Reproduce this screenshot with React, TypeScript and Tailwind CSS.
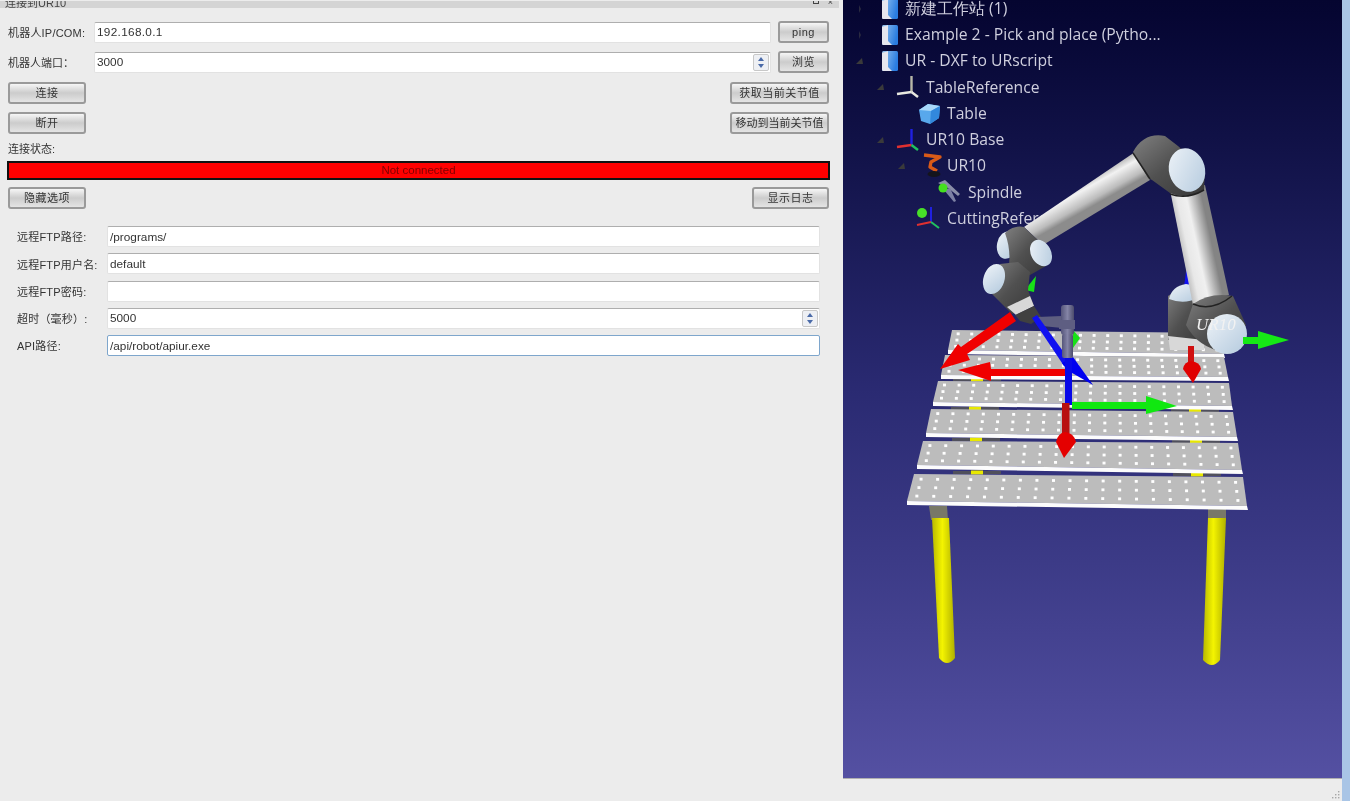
import React from "react";

const ui = "font-['Liberation_Sans','Noto_Sans_CJK_SC',sans-serif]";

function Btn({ children, className = "" }: { children: React.ReactNode; className?: string }) {
  return (
    <div className={`h-[22px] flex items-center justify-center rounded-[3px] border-2 border-[#9a9a9a] bg-gradient-to-b from-[#f6f6f6] via-[#cccccc] to-[#e4e4e4] text-[11px] tracking-[0.5px] text-[#333] ${className}`}>
      {children}
    </div>
  );
}

function Spin({ className = "" }: { className?: string }) {
  return (
    <div className={`w-[16px] h-[17px] flex flex-col border border-[#c8c8c8] bg-[#eef0f4] rounded-[2px] ${className}`}>
      <svg width="14" height="8" viewBox="0 0 14 8"><path d="M7 2 L10 6 H4 Z" fill="#4a6aa8" /></svg>
      <svg width="14" height="7" viewBox="0 0 14 7"><path d="M7 5 L10 1 H4 Z" fill="#4a6aa8" /></svg>
    </div>
  );
}

function Field({ value, spin, focus, className = "" }: { value?: string; spin?: boolean; focus?: boolean; className?: string }) {
  return (
    <div className={`flex-1 h-[21px] flex items-center justify-between rounded-[2px] bg-white border ${focus ? "border-[#7ea6cc]" : "border-[#e2e2e2] border-t-[#aeaeae]"} pl-[2px] pr-[1px] text-[11.8px] text-[#333] ${className}`}>
      <span className="pt-[2px]">{value}</span>
      {spin && <Spin />}
    </div>
  );
}

function FormRow({ label, value, spin, focus }: { label: string; value?: string; spin?: boolean; focus?: boolean }) {
  return (
    <div className="flex items-center">
      <div className="w-[90px] pt-[2px] text-[11px] tracking-[0.2px] text-[#333] whitespace-nowrap">{label}</div>
      <Field value={value} spin={spin} focus={focus} />
    </div>
  );
}

function Station() {
  return (
    <svg width="17" height="22" viewBox="0 0 17 22">
      <defs>
        <linearGradient id="st" x1="0" y1="0" x2="1" y2="0.3">
          <stop offset="0" stopColor="#9cc8f0" /><stop offset="1" stopColor="#2a7ce0" />
        </linearGradient>
      </defs>
      <rect x="1" y="1" width="16" height="20" rx="1.5" fill="url(#st)" />
      <path d="M1 3 L7 1 V17 L11 21 H2 Q1 21 1 19 Z" fill="#e6e6ee" />
    </svg>
  );
}

function Frame({ color }: { color?: boolean }) {
  const z = color ? "#2020e0" : "#b8b8a8";
  const x = color ? "#e03030" : "#e8e8e0";
  const y = color ? "#20c060" : "#e8e8e0";
  return (
    <svg width="25" height="24" viewBox="0 0 25 24" className="shrink-0">
      <path d="M16.5 1 V17" stroke={z} strokeWidth="2.4" />
      <path d="M16.5 17 L2 19" stroke={x} strokeWidth="2.4" />
      <path d="M16.5 17 L23 22" stroke={y} strokeWidth="2.4" />
    </svg>
  );
}

function Box() {
  return (
    <svg width="23" height="22" viewBox="0 0 23 22">
      <path d="M1 7 L10 1 L22 3 L21 15 L12 21 L3 18 Z" fill="#58a8ec" />
      <path d="M1 7 L10 1 L22 3 L13 8 Z" fill="#a8d8fa" />
      <path d="M13 8 L22 3 L21 15 L12 21 Z" fill="#3288dc" />
    </svg>
  );
}

function RobotIcon() {
  return (
    <svg width="20" height="26" viewBox="0 0 20 26">
      <path d="M1 2 L17 4 L8 9 L7 14 L14 18" stroke="#d85a18" strokeWidth="3.4" fill="none" strokeLinejoin="round" />
      <ellipse cx="11" cy="21" rx="6.5" ry="3" fill="#14141c" />
    </svg>
  );
}

function Spindle() {
  return (
    <svg width="24" height="24" viewBox="0 0 24 24">
      <path d="M1 3 L8 0 L23 14 L21 16 L11 8 Z" fill="#8a8ea8" />
      <path d="M7 10 L17 22 L19 21 L13 8 Z" fill="#7c80a4" />
      <circle cx="6" cy="8" r="4.5" fill="#44e020" />
    </svg>
  );
}

function CutIcon() {
  return (
    <svg width="25" height="24" viewBox="0 0 25 24">
      <circle cx="6" cy="6" r="5" fill="#48e028" />
      <path d="M15 0 V15" stroke="#2020e0" strokeWidth="2" />
      <path d="M15 15 L1 18" stroke="#e03030" strokeWidth="2" />
      <path d="M15 15 L23 21" stroke="#20c060" strokeWidth="2" />
    </svg>
  );
}

const levels = ["pl-[4px]", "pl-[25px]", "pl-[46px]", "pl-[67px]"];

function TreeRow({ level, open, none, icon, text }: { level: number; open?: boolean; none?: boolean; icon: React.ReactNode; text: string }) {
  return (
    <div className={`h-[26.25px] flex items-center whitespace-nowrap ${levels[level]}`}>
      <div className="w-[34px] pl-[9px] shrink-0">
        {!none && (
          <svg width="8" height="8" viewBox="0 0 8 8">
            {open ? <path d="M6 1 L7 7 H0 Z" fill="#3a3a3a" /> : <path d="M3 0 L5 4 L3 8 Z" fill="#2a2a40" />}
          </svg>
        )}
      </div>
      <div className="w-[24px] shrink-0 flex items-center justify-end">{icon}</div>
      <span className="text-[15.7px] text-[#cfcfde] font-['Open_Sans',sans-serif]">{text}</span>
    </div>
  );
}

const planks = [
  [[952, 330], [1223, 333], [948, 350], [1224, 354]],
  [[945, 355], [1224, 357], [941, 375], [1228, 377]],
  [[938, 381], [1229, 383], [933, 402], [1232, 406]],
  [[931, 409], [1233, 412], [926, 433], [1237, 437]],
  [[923, 441], [1238, 443], [917, 465], [1242, 470]],
  [[914, 474], [1243, 477], [907, 501], [1247, 506]],
];

function Scene() {
  const dots: React.ReactNode[] = [];
  planks.forEach((p, k) => {
    const [tl, tr, bl, br] = p;
    for (let r = 0; r < 3; r++) {
      const v = (r + 0.6) / 3.2;
      for (let c = 0; c < 20; c++) {
        const u = (c + 0.5) / 20;
        const x = (1 - v) * ((1 - u) * tl[0] + u * tr[0]) + v * ((1 - u) * bl[0] + u * br[0]);
        const y = (1 - v) * ((1 - u) * tl[1] + u * tr[1]) + v * ((1 - u) * bl[1] + u * br[1]);
        dots.push(<rect key={`${k}-${r}-${c}`} x={x - 1.4} y={y - 1.4} width="3" height="2.8" fill="#ffffff" />);
      }
    }
  });
  return (
    <svg className="absolute inset-0" width="499" height="779" viewBox="843 0 499 779">
      <defs>
        <linearGradient id="legL" x1="0" x2="1" y1="0" y2="0">
          <stop offset="0" stopColor="#b8b800" /><stop offset="0.45" stopColor="#f4f400" /><stop offset="1" stopColor="#b0b000" />
        </linearGradient>
        <linearGradient id="arm1" gradientUnits="userSpaceOnUse" x1="1077" y1="182" x2="1091" y2="207">
          <stop offset="0" stopColor="#a4a4a4" /><stop offset="0.35" stopColor="#f2f2f2" /><stop offset="0.8" stopColor="#bcbcbc" /><stop offset="1" stopColor="#8c8c8c" />
        </linearGradient>
        <linearGradient id="arm2" gradientUnits="userSpaceOnUse" x1="1175" y1="252" x2="1212" y2="244">
          <stop offset="0" stopColor="#9c9c9c" /><stop offset="0.35" stopColor="#e8e8e8" /><stop offset="0.6" stopColor="#f0f0f0" /><stop offset="1" stopColor="#848484" />
        </linearGradient>
        <linearGradient id="cap" x1="0" y1="0" x2="1" y2="1">
          <stop offset="0" stopColor="#eef3f8" /><stop offset="1" stopColor="#b4cade" />
        </linearGradient>
        <linearGradient id="dark" x1="0" y1="0" x2="1" y2="1">
          <stop offset="0" stopColor="#808080" /><stop offset="0.5" stopColor="#505050" /><stop offset="1" stopColor="#383838" />
        </linearGradient>
        <linearGradient id="tool" x1="0" x2="1" y1="0" y2="0">
          <stop offset="0" stopColor="#55557a" /><stop offset="0.5" stopColor="#8484a6" /><stop offset="1" stopColor="#4c4c6c" />
        </linearGradient>
      </defs>

      {/* legs */}
      <polygon points="929,506 947,506 948,520 931,520" fill="#787868" />
      <polygon points="1208,508 1226,508 1226,520 1208,520" fill="#787868" />
      <path d="M932 518 H949 L955 658 Q947 668 939 658 Z" fill="url(#legL)" />
      <path d="M1208 518 H1226 L1220 660 Q1212 670 1203 660 Z" fill="url(#legL)" />

      {/* yellow joints */}
      {[[977, 379], [975, 408], [976, 439], [977, 472], [1195, 410], [1196, 441], [1197, 474]].map(([x, y], i) => (
        <g key={i}>
          <rect x={x - 24} y={y - 1} width="48" height="3" fill="#50505c" />
          <rect x={x - 6} y={y - 1.5} width="12" height="4" fill="#e8e800" />
        </g>
      ))}

      {/* planks */}
      {planks.map((p, i) => (
        <g key={i}>
          <polygon points={`${p[0]} ${p[1]} ${p[3]} ${p[2]}`} fill="#bcbcbc" />
          <polygon points={`${p[2]} ${p[3]} ${p[3][0] + 1},${p[3][1] + 4} ${p[2][0]},${p[2][1] + 4}`} fill="#fcfcfc" />
        </g>
      ))}
      {dots}

      {/* small arrows behind robot */}
      <polygon points="1184,287 1187,264 1191,287" fill="#1010f0" />
      <polygon points="1025,290 1036,276 1034,292" fill="#18e018" />
      <polygon points="1073,330 1080,338 1073,348" fill="#18e018" />

      {/* base */}
      <path d="M1168 296 Q1182 286 1198 290 L1204 340 L1168 340 Z" fill="url(#dark)" />
      <path d="M1169 299 Q1172 286 1186 284 Q1198 285 1198 298 Q1184 305 1169 299 Z" fill="url(#cap)" />
      <path d="M1168 336 L1204 340 L1204 350 L1170 350 Z" fill="#d8d8d8" />

      {/* forearm */}
      <polygon points="1170,190 1205,185 1229,295 1193,305" fill="url(#arm2)" />
      {/* upper arm */}
      <polygon points="1135,152 1150,180 1043,245 1024,227" fill="url(#arm1)" />
      {/* elbow */}
      <path d="M1133 152 Q1144 132 1165 136 L1178 146 L1205 170 L1204 190 Q1185 200 1170 193 L1152 180 L1148 178 Z" fill="url(#dark)" />
      <path d="M1133 153 L1150 179" stroke="#222" strokeWidth="1.5" />
      <path d="M1170 194 Q1187 200 1204 190" stroke="#222" strokeWidth="1.5" fill="none" />
      <ellipse cx="1187" cy="170" rx="18" ry="22" transform="rotate(-15 1187 170)" fill="url(#cap)" />

      {/* shoulder */}
      <path d="M1193 304 Q1210 292 1233 296 L1246 325 L1225 352 Q1198 348 1186 325 Z" fill="url(#dark)" />
      <path d="M1193 304 Q1212 312 1232 296" stroke="#222" strokeWidth="1.5" fill="none" />
      <ellipse cx="1227" cy="334" rx="20" ry="20" fill="url(#cap)" />
      <text x="1196" y="330" className="italic" fontFamily="'Liberation Serif',serif" fontSize="17" fill="#f2f2f2">UR10</text>

      {/* arrows near base */}
      <polygon points="1243,337 1258,337 1258,331 1289,340 1258,349 1258,344 1243,344" fill="#16e816" />
      <rect x="1188" y="346" width="6" height="18" fill="#d01010" />
      <path d="M1183 369 Q1184 362 1191 361 Q1200 362 1201 369 L1193 383 Z" fill="#e00000" />

      {/* wrist: upper joint */}
      <ellipse cx="1007" cy="245" rx="10" ry="14" transform="rotate(12 1007 245)" fill="url(#cap)" />
      <path d="M1005 233 Q1014 225 1024 227 L1043 245 L1046 266 L1030 275 L1008 272 Q1012 252 1005 233 Z" fill="url(#dark)" />
      <ellipse cx="1041" cy="253" rx="10" ry="14" transform="rotate(-28 1041 253)" fill="url(#cap)" />
      {/* wrist: lower joint */}
      <path d="M1000 264 L1018 262 L1030 272 L1028 290 L1034 306 L1012 314 L988 290 Z" fill="url(#dark)" />
      <ellipse cx="994" cy="279" rx="10.5" ry="15.5" transform="rotate(18 994 279)" fill="url(#cap)" />
      <polygon points="1007,307 1030,296 1034,306 1016,315" fill="#d8d8d8" />
      <polygon points="1015,315 1034,306 1041,317 1031,324 1020,321" fill="#404040" />

      {/* tool link */}
      <polygon points="1037,317 1062,316 1062,328 1042,326" fill="#5e5e80" />

      {/* blue diagonal */}
      <polygon points="1032,318 1037,315 1070,361 1064,366" fill="#1010f0" />
      <polygon points="1062,363 1073,357 1093,385 1067,370" fill="#0000f0" />
      <rect x="1065" y="358" width="7" height="47" fill="#0808e8" />

      <rect x="1061" y="305" width="13" height="30" rx="3" fill="url(#tool)" />
      <rect x="1059" y="320" width="16" height="9" fill="#5e5e82" />
      <rect x="1062" y="334" width="11" height="24" rx="2" fill="url(#tool)" />

      {/* red horizontal */}
      <polygon points="1065,369 991,369 990,362 958,370 991,381 991,376 1065,376" fill="#f00000" />
      {/* large red diagonal */}
      <polygon points="1010,312 1016,321 967,354 970,360 940,369 958,344 961,347" fill="#f00000" />
      {/* green */}
      <polygon points="1072,402 1146,402 1146,396 1177,406 1146,414 1146,409 1072,409" fill="#10e810" />
      {/* red down */}
      <rect x="1062" y="403" width="7.5" height="30" fill="#b81010" />
      <path d="M1056 442 Q1058 433 1065 432 Q1074 433 1076 442 L1064 458 Z" fill="#e40000" />
    </svg>
  );
}

export default function App() {
  return (
    <div className={`w-[1350px] h-[801px] flex overflow-hidden bg-[#ececec] blur-[0.5px] ${ui}`}>
      <div className="w-[1342px] flex flex-col">
        <div className="h-[779px] flex">
          {/* dialog */}
          <div className="w-[843px] pt-[1px]">
            <div className="w-[839px] h-[7px] bg-[#d4d4d4] overflow-hidden flex justify-between pl-[5px] pr-[6px]">
              <span className="text-[11px] leading-[5px] text-[#444]">连接到UR10</span>
              <div className="flex gap-[9px] items-start">
                <div className="w-[6px] h-[3px] border border-t-0 border-[#444]" />
                <span className="text-[9px] leading-[2px] text-[#444]">×</span>
              </div>
            </div>
            <div className="pl-[8px] pr-[14px] pt-[13px]">
              <div className="flex items-center">
                <div className="w-[86px] pt-[2px] text-[11px] tracking-[0.2px] text-[#333] whitespace-nowrap">机器人IP/COM:</div>
                <Field value="192.168.0.1" className="tracking-[0.3px]" />
                <Btn className="w-[51px] ml-[7px]">ping</Btn>
              </div>
              <div className="flex items-center mt-[8px]">
                <div className="w-[86px] pt-[2px] text-[11px] text-[#333] whitespace-nowrap">机器人端口：</div>
                <Field value="3000" spin />
                <Btn className="w-[51px] ml-[7px]">浏览</Btn>
              </div>
              <div className="flex justify-between mt-[9px]">
                <Btn className="w-[78px]">连接</Btn>
                <Btn className="w-[99px]">获取当前关节值</Btn>
              </div>
              <div className="flex justify-between mt-[8px]">
                <Btn className="w-[78px]">断开</Btn>
                <Btn className="w-[99px] tracking-normal">移动到当前关节值</Btn>
              </div>
              <div className="mt-[9px] h-[12px] leading-[12px] text-[11px] text-[#333]">连接状态:</div>
              <div className="mt-[6px] -mx-[1px] h-[19px] bg-[#ff0000] border-2 border-[#111] flex items-center justify-center text-[11.5px] text-[#800000]">
                Not connected
              </div>
              <div className="flex justify-between mt-[7px]">
                <Btn className="w-[78px]">隐藏选项</Btn>
                <Btn className="w-[77px]">显示日志</Btn>
              </div>
              <div className="mt-[17px] pl-[9px] pr-[9px] flex flex-col gap-[6.25px]">
                <FormRow label="远程FTP路径:" value="/programs/" />
                <FormRow label="远程FTP用户名:" value="default" />
                <FormRow label="远程FTP密码:" />
                <FormRow label="超时（毫秒）:" value="5000" spin />
                <FormRow label="API路径:" value="/api/robot/apiur.exe" focus />
              </div>
            </div>
          </div>

          {/* 3D view */}
          <div className="relative w-[499px] h-[779px] overflow-hidden bg-gradient-to-b from-[#050530] via-[#2a2a72] via-50% to-[#5450a2] border-b border-[#b0b0b0]">
            <div className="-mt-[4.6px]">
              <TreeRow level={0} icon={<div className="w-[24px]"><Station /></div>} text="新建工作站 (1)" />
              <TreeRow level={0} icon={<div className="w-[24px]"><Station /></div>} text="Example 2 - Pick and place (Pytho..." />
              <TreeRow level={0} open icon={<div className="w-[24px]"><Station /></div>} text="UR - DXF to URscript" />
              <TreeRow level={1} open icon={<div className="mr-[6px]"><Frame /></div>} text="TableReference" />
              <TreeRow level={2} none icon={<div className="w-[24px] mr-[6px]"><Box /></div>} text="Table" />
              <TreeRow level={1} open icon={<div className="mr-[6px]"><Frame color /></div>} text="UR10 Base" />
              <TreeRow level={2} open icon={<div className="w-[24px] mr-[4px]"><RobotIcon /></div>} text="UR10" />
              <TreeRow level={3} none icon={<div className="w-[24px] mr-[7px]"><Spindle /></div>} text="Spindle" />
              <TreeRow level={2} none icon={<div className="w-[24px] mr-[7px]"><CutIcon /></div>} text="CuttingReference" />
            </div>
            <Scene />
          </div>
        </div>
        {/* status bar */}
        <div className="flex-1 flex justify-end items-end pr-[2px] pb-[2px]">
          <svg width="9" height="9" viewBox="0 0 9 9" fill="#a8a8a8">
            <rect x="7" y="1" width="1.4" height="1.4" /><rect x="7" y="4" width="1.4" height="1.4" /><rect x="4" y="4" width="1.4" height="1.4" />
            <rect x="7" y="7" width="1.4" height="1.4" /><rect x="4" y="7" width="1.4" height="1.4" /><rect x="1" y="7" width="1.4" height="1.4" />
          </svg>
        </div>
      </div>
      <div className="w-[8px] bg-[#a9c5e6]" />
    </div>
  );
}
